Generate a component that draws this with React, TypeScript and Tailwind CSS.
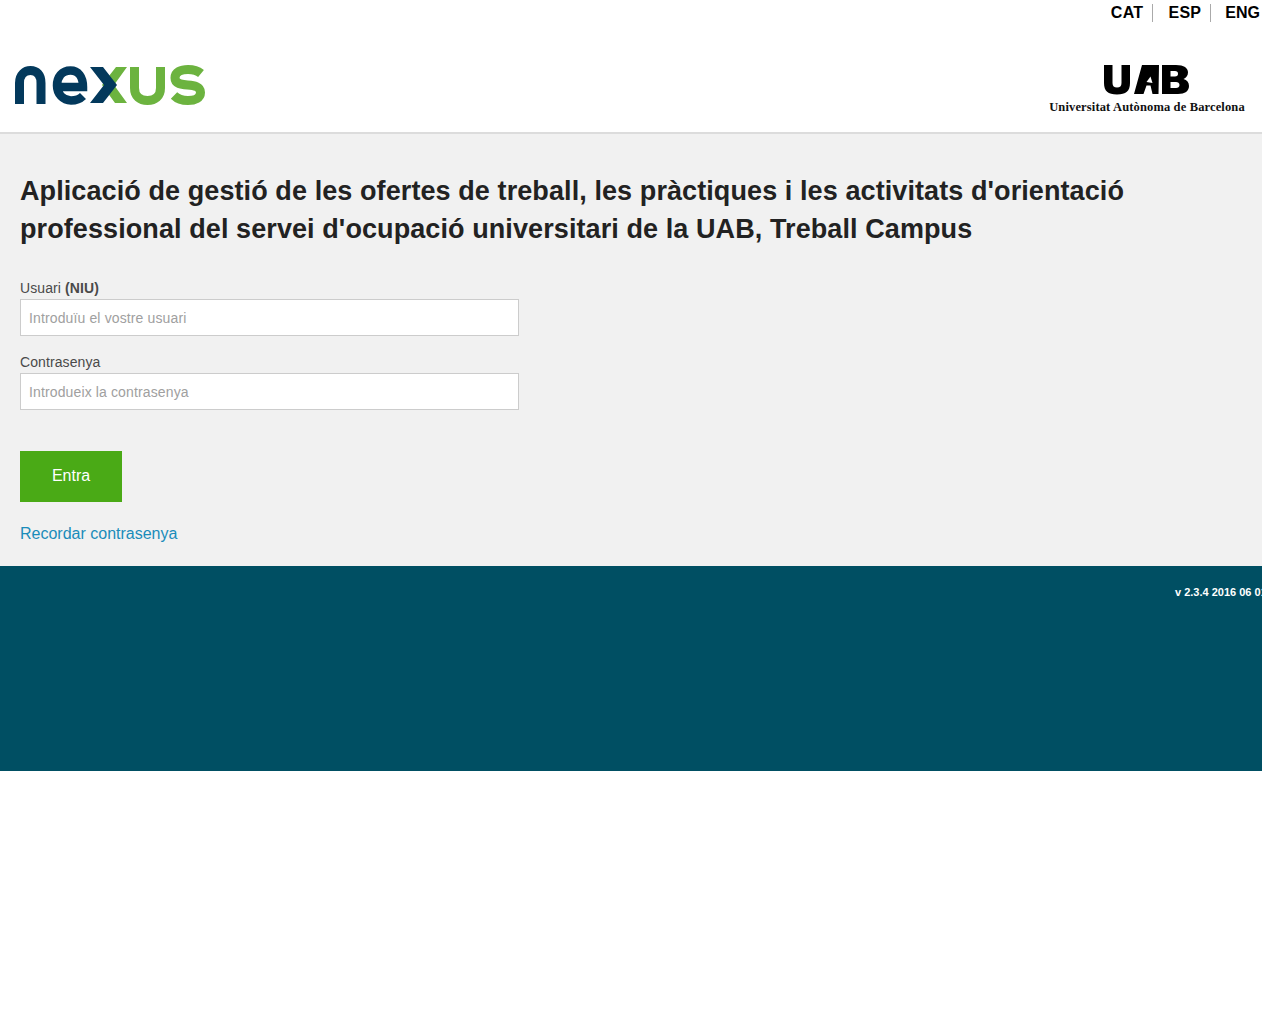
import React from 'react';

const NexusLogo = () => (
  <svg width="192" height="42" viewBox="14 65 192 42" fill="none" aria-label="nexus">
    {/* n */}
    <path d="M19.500 104V83C19.500 74.500 25 70.500 30.500 70.500C36.500 70.500 41 74.500 41 83V104" stroke="#03395c" strokeWidth="9" />
    {/* e */}
    <path d="M57 87H83C83 76.500 78 70.500 70.500 70.500C62 70.500 57 77 57 85.500C57 94 63 100.500 71 100.500C76 100.500 80 99 83 96" stroke="#03395c" strokeWidth="8.500" />
    {/* x: green arm sits under the navy one */}
    <path d="M116 67H127L114 85L127 103H115L102 85z" fill="#6cb33f" />
    <path d="M90 67H103L117 85L103 103H90L104 85z" fill="#03395c" />
    {/* u */}
    <path d="M134.500 67V88C134.500 96.500 140 100.500 147.500 100.500C155 100.500 160.500 96.500 160.500 88V67" stroke="#6cb33f" strokeWidth="9" />
    {/* s */}
    <path d="M201 73.500C198 71 194 69.500 188 69.500C181 69.500 175 72 175 78C175 90 200.500 80 200.500 92.500C200.500 98 195 100.500 188 100.500C182 100.500 177 98.500 174 95.500" stroke="#6cb33f" strokeWidth="9" />
  </svg>
);

const UabLogo = () => (
  <svg width="86" height="30" viewBox="0 0 86 30" aria-label="UAB">
    <path d="M0 0h8.500v18c0 3 1.500 4.500 4.500 4.500s4.500-1.500 4.500-4.500V0H26v18c0 8-4 11.500-13 11.500S0 26 0 18z" fill="#000" />
    <path d="M38 0H55L54.500 29H48.500L46.500 20.500L42.500 20.500L39.500 29H30z" fill="#000" />
    <path d="M46.500 11.500L48.500 18L42.500 17z" fill="#fff" />
    <path d="M58 0h14c8 0 12 3 12 7.500 0 3-2 5.500-4.500 6.500 3.500 1 5.500 3.500 5.500 7 0 5-4 8-11 8H58zm8.500 6v5.500h4.500c2 0 3-1 3-2.800S73 6 71 6zm0 11v6h5.500c2 0 3.500-1 3.500-3s-1.500-3-3.500-3z" fill="#000" fillRule="evenodd" />
  </svg>
);

export default function App() {
  return (
    <div className="w-[1262px] min-h-[1022px] bg-white font-['Liberation_Sans',Arial,sans-serif] overflow-hidden">
      <div className="h-[24px] flex justify-end items-center pt-[1px] text-[16px] font-bold text-black leading-[18px]">
        <span className="pr-[9px] border-r border-[#aaa] tracking-[0.3px]">CAT</span>
        <span className="pl-[15px] pr-[9px] border-r border-[#aaa] tracking-[0.3px]">ESP</span>
        <span className="pl-[14px] pr-[2px]">ENG</span>
      </div>

      <header className="h-[110px] flex justify-between border-b-2 border-[#dcdcdc]">
        <div className="pl-[14px] pt-[41px]">
          <NexusLogo />
        </div>
        <div className="w-[196px] mr-[17px] pt-[41px] flex flex-col items-center">
          <UabLogo />
          <span className="mt-[5px] whitespace-nowrap font-['Liberation_Serif',serif] font-bold text-[12.500px] tracking-[0.14px] leading-[14px] text-[#111]">
            Universitat Autònoma de Barcelona
          </span>
        </div>
      </header>

      <main className="h-[432px] bg-[#f1f1f1] px-[20px] pt-[38px]">
        <h1 className="w-[1180px] text-[27px] tracking-[0.09px] leading-[38px] font-bold text-[#222]">
          Aplicació de gestió de les ofertes de treball, les pràctiques i les activitats d'orientació professional del servei d'ocupació universitari de la UAB, Treball Campus
        </h1>

        <form className="w-[499px] mt-[32px]">
          <label className="block text-[14px] tracking-[0.1px] leading-[16px] text-[#4a4a4a]">
            Usuari <b>(NIU)</b>
          </label>
          <input
            placeholder="Introduïu el vostre usuari"
            className="block w-full h-[37px] mt-[3px] px-[8px] bg-white border border-[#ccc] text-[14px] tracking-[0.13px] placeholder:text-[#a0a0a0] outline-none"
          />
          <label className="block mt-[18px] text-[14px] tracking-[0.1px] leading-[16px] text-[#4a4a4a]">Contrasenya</label>
          <input
            placeholder="Introdueix la contrasenya"
            className="block w-full h-[37px] mt-[3px] px-[8px] bg-white border border-[#ccc] text-[14px] tracking-[0.13px] placeholder:text-[#a0a0a0] outline-none"
          />
          <button type="button" className="block w-[102px] h-[51px] mt-[41px] pb-[2px] bg-[#4aaa16] text-white text-[16px]">
            Entra
          </button>
          <a href="#" className="block mt-[23px] text-[16px] leading-[18px] text-[#1a8cba]">
            Recordar contrasenya
          </a>
        </form>
      </main>

      <footer className="h-[205px] bg-[#004f63] overflow-hidden pl-[1175px] pt-[20px]">
        <p className="whitespace-nowrap text-[11px] leading-[13px] font-bold text-white">v 2.3.4 2016 06 01</p>
      </footer>
    </div>
  );
}
